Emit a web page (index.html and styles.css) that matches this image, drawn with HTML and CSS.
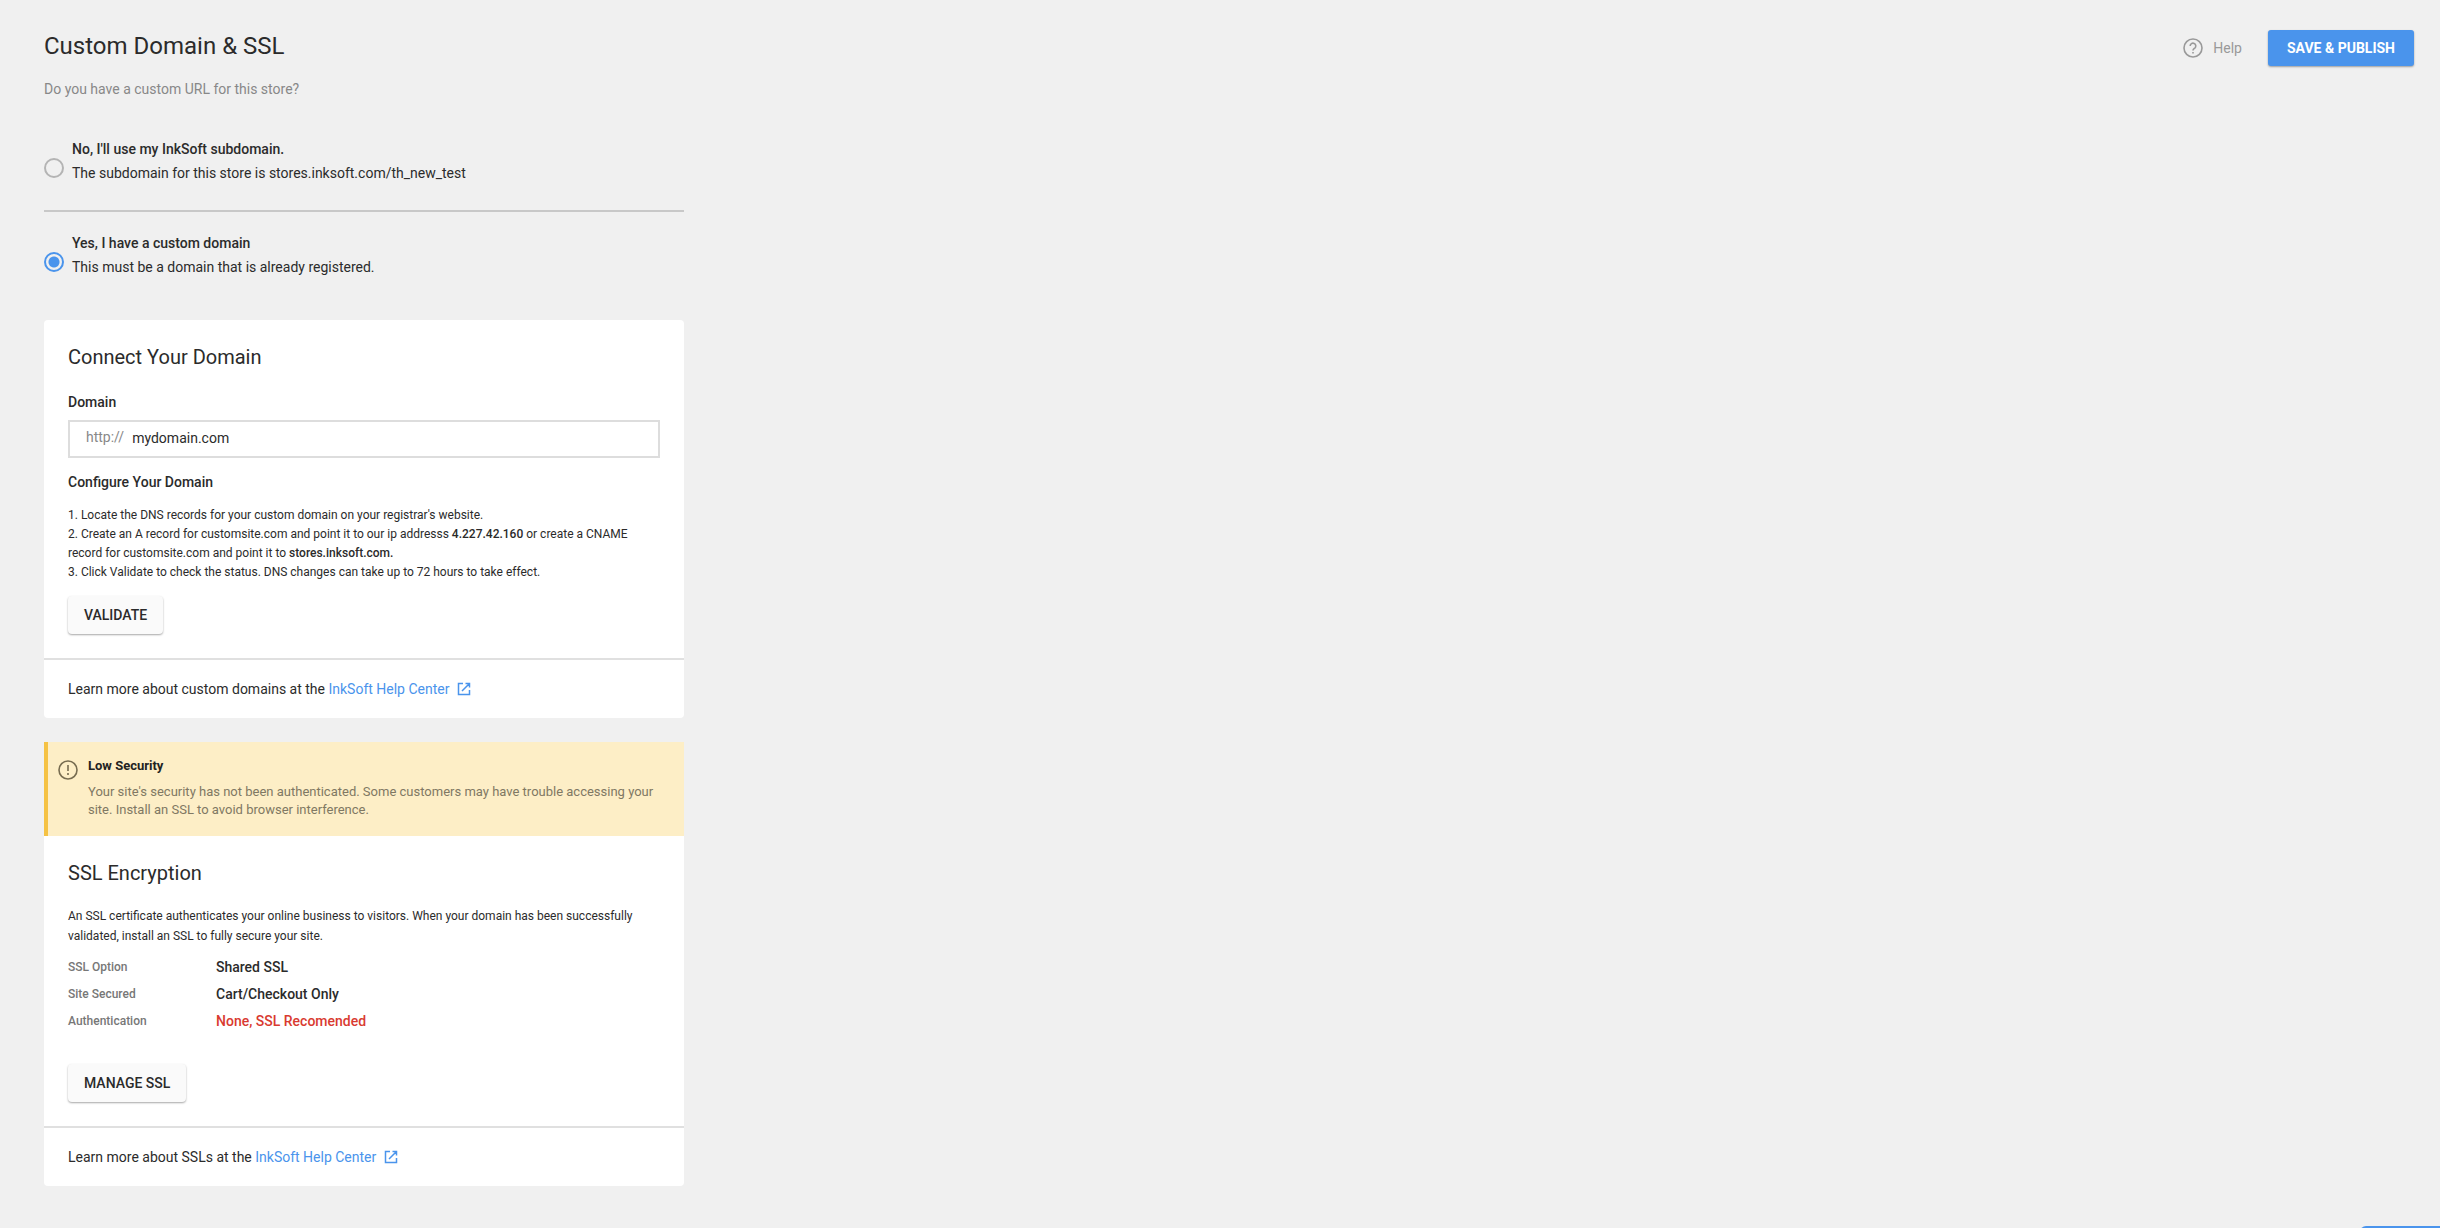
FILE: index.html
```
<!DOCTYPE html>
<html lang="en">
<head>
  <meta charset="UTF-8">
  <meta name="viewport" content="width=device-width, initial-scale=1.0">
  <title>Custom Domain &amp; SSL</title>
  <link rel="stylesheet" href="styles.css">
</head>
<body>
  <header class="page-header">
    <div>
      <h1 class="page-title">Custom Domain &amp; SSL</h1>
      <p class="page-subtitle">Do you have a custom URL for this store?</p>
    </div>
    <div class="page-actions">
      <a class="help" href="#">
        <svg class="icon" viewBox="0 0 20 20">
          <circle cx="10" cy="10" r="9" />
          <path d="M7.2 8a2.8 2.8 0 1 1 4.6 2.1c-1 .8-1.8 1.200-1.800 2.400M10 14v1.600" />
        </svg>
        Help
      </a>
      <button class="btn btn-primary" type="button">SAVE &amp; PUBLISH</button>
    </div>
  </header>

  <main class="content">
    <div class="options">
      <label class="option">
        <input type="radio" name="domain-type" value="subdomain">
        <span class="option-text">
          <strong>No, I'll use my InkSoft subdomain.</strong>
          <span>The subdomain for this store is stores.inksoft.com/th_new_test</span>
        </span>
      </label>
      <label class="option">
        <input type="radio" name="domain-type" value="custom" checked>
        <span class="option-text">
          <strong>Yes, I have a custom domain</strong>
          <span>This must be a domain that is already registered.</span>
        </span>
      </label>
    </div>

    <section class="card">
      <div class="card-body">
        <h2 class="card-title">Connect Your Domain</h2>
        <label class="field-label" for="domain">Domain</label>
        <div class="domain-field">
          <span class="prefix">http://</span>
          <input type="text" id="domain" value="mydomain.com">
        </div>
        <h3 class="field-label">Configure Your Domain</h3>
        <div class="steps">
          <p>1. Locate the DNS records for your custom domain on your registrar's website.</p>
          <p>2. Create an A record for customsite.com and point it to our ip addresss <b>4.227.42.160</b> or create a CNAME record for customsite.com and point it to <b>stores.inksoft.com.</b></p>
          <p>3. Click Validate to check the status. DNS changes can take up to 72 hours to take effect.</p>
        </div>
        <button class="btn" type="button">VALIDATE</button>
      </div>
      <footer class="card-footer">
        Learn more about custom domains at the
        <a href="#">InkSoft Help Center
          <svg class="icon-link" viewBox="0 0 14 14">
            <path d="M6 1.500H1.500V12.500H12.500V8M8.500 1.500H12.500V5.500M12.500 1.500L5 9" />
          </svg>
        </a>
      </footer>
    </section>

    <section class="card card-flat">
      <div class="alert">
        <svg class="icon" viewBox="0 0 20 20">
          <circle cx="10" cy="10" r="9" />
          <path d="M10 5v6M10 13v2" />
        </svg>
        <div>
          <strong class="alert-title">Low Security</strong>
          <p>Your site's security has not been authenticated. Some customers may have trouble accessing your site. Install an SSL to avoid browser interference.</p>
        </div>
      </div>
      <div class="card-body">
        <h2 class="card-title">SSL Encryption</h2>
        <p class="ssl-text">An SSL certificate authenticates your online business to visitors. When your domain has been successfully validated, install an SSL to fully secure your site.</p>
        <dl class="details">
          <dt>SSL Option</dt>
          <dd>Shared SSL</dd>
          <dt>Site Secured</dt>
          <dd>Cart/Checkout Only</dd>
          <dt>Authentication</dt>
          <dd class="danger">None, SSL Recomended</dd>
        </dl>
        <button class="btn" type="button">MANAGE SSL</button>
      </div>
      <footer class="card-footer">
        Learn more about SSLs at the
        <a href="#">InkSoft Help Center
          <svg class="icon-link" viewBox="0 0 14 14">
            <path d="M6 1.500H1.500V12.500H12.500V8M8.500 1.500H12.500V5.500M12.500 1.500L5 9" />
          </svg>
        </a>
      </footer>
    </section>
  </main>

  <button class="chat-tab" type="button" aria-label="Chat"></button>
</body>
</html>
```
FILE: styles.css
```
* {
  margin: 0;
  padding: 0;
  box-sizing: border-box;
}

body {
  min-height: 100vh;
  padding: 30px 26px 40px 44px;
  background-color: #f0f0f0;
  color: #2b2b2b;
  font-family: Roboto, Arial, sans-serif;
  font-size: 14px;
  line-height: 24px;
}

input, button {
  font-family: inherit;
}

a {
  color: #4a94ec;
  text-decoration: none;
}

svg {
  fill: none;
  stroke: currentColor;
}

.icon {
  width: 20px;
  height: 20px;
  flex-shrink: 0;
  stroke-width: 1.6;
}

.icon-link {
  width: 14px;
  height: 14px;
  margin-left: 4px;
  vertical-align: -2px;
  stroke-width: 1.5;
}

/* Header */
.page-header {
  display: flex;
  justify-content: space-between;
  align-items: flex-start;
}

.page-title {
  font-size: 24px;
  font-weight: 400;
  line-height: 32px;
}

.page-subtitle {
  margin-top: 15px;
  color: #888;
}

.page-actions {
  display: flex;
  align-items: center;
  gap: 26px;
}

.help {
  display: flex;
  align-items: center;
  gap: 10px;
  color: #999;
}

/* Buttons */
.btn {
  height: 38px;
  padding: 0 16px;
  border: none;
  border-radius: 4px;
  background-color: #fafafa;
  color: #2b2b2b;
  font-size: 14px;
  font-weight: 500;
  cursor: pointer;
  box-shadow: 0 1px 2px rgba(0, 0, 0, 0.35);
}

.btn-primary {
  height: 36px;
  padding: 0 19px;
  border-radius: 3px;
  background-color: #4a94ec;
  color: white;
  font-weight: 700;
}

/* Domain choice */
.content {
  max-width: 640px;
}

.options {
  padding: 12px 0 16px;
}

.option {
  display: flex;
  align-items: center;
  gap: 8px;
  padding: 24px 0 25px;
  cursor: pointer;
}

.option + .option {
  border-top: 2px solid #c8c8c8;
  padding-top: 19px;
}

.option input {
  appearance: none;
  width: 20px;
  height: 20px;
  margin-top: 14px;
  border: 2px solid #b4b4b4;
  border-radius: 50%;
}

.option input:checked {
  border-color: #4a94ec;
  background: radial-gradient(#4a94ec 5px, transparent 6px);
}

.option-text {
  display: flex;
  flex-direction: column;
}

.option strong, .field-label {
  font-weight: 500;
}

/* Cards */
.card {
  margin-bottom: 24px;
  border-radius: 4px;
  background-color: white;
}

.card-flat {
  border-radius: 0 0 4px 4px;
}

.card-body {
  padding: 24px;
}

.card-title {
  margin-bottom: 20px;
  font-size: 20px;
  font-weight: 400;
  line-height: 26px;
}

.card-footer {
  padding: 17px 24px;
  border-top: 2px solid #e0e0e0;
}

.field-label {
  display: block;
  font-size: 14px;
}

.domain-field {
  display: flex;
  height: 38px;
  margin: 6px 0 12px;
  padding: 0 16px 2px;
  border: 2px solid #ddd;
}

.prefix {
  line-height: 30px;
  color: #888;
}

.domain-field input {
  flex: 1;
  margin-left: 8px;
  border: none;
  outline: none;
  color: #2b2b2b;
  font-size: 14px;
}

.steps {
  margin: 12px 0 14px;
  font-size: 12px;
  line-height: 19px;
}

.steps b {
  font-weight: 500;
}

/* Security warning */
.alert {
  display: flex;
  gap: 10px;
  padding: 15px 20px 17px 10px;
  border-left: 4px solid #f5c244;
  background-color: #fdeec6;
  color: #807863;
  font-size: 13px;
  line-height: 18px;
}

.alert .icon {
  margin-top: 3px;
  color: #776c50;
}

.alert-title {
  display: block;
  margin-bottom: 8px;
  color: #222;
  font-weight: 700;
}

.ssl-text {
  font-size: 12px;
  line-height: 20px;
}

.details {
  display: grid;
  grid-template-columns: 148px 1fr;
  row-gap: 3px;
  margin: 9px 0 31px;
}

.details dt {
  color: #777;
  font-size: 12px;
  font-weight: 500;
}

.details dd {
  font-weight: 500;
}

.details .danger {
  color: #d93a30;
}

/* Chat tab, mostly below the window edge */
.chat-tab {
  position: fixed;
  right: -20px;
  bottom: -38px;
  width: 100px;
  height: 40px;
  border: none;
  border-radius: 6px;
  background-color: #4a94ec;
}
```
